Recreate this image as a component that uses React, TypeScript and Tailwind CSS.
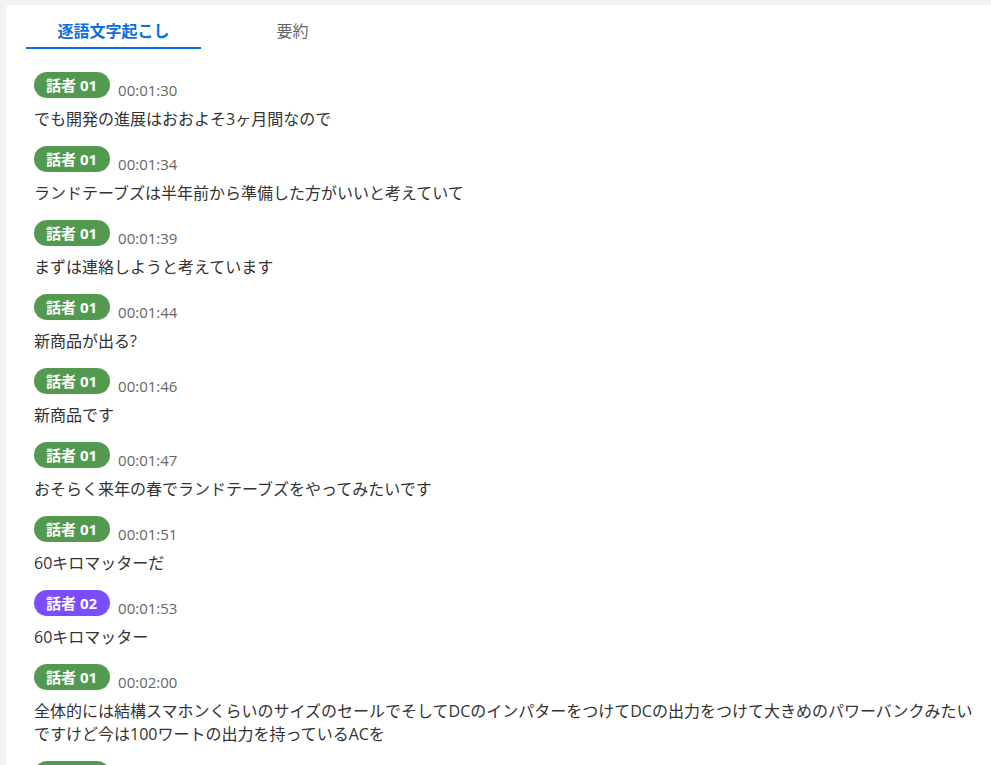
import React, { useState } from 'react';

type Entry = { speaker: '01' | '02'; time: string; text: string };

const entries: Entry[] = [
  { speaker: '01', time: '00:01:30', text: 'でも開発の進展はおおよそ3ヶ月間なので' },
  { speaker: '01', time: '00:01:34', text: 'ランドテーブズは半年前から準備した方がいいと考えていて' },
  { speaker: '01', time: '00:01:39', text: 'まずは連絡しようと考えています' },
  { speaker: '01', time: '00:01:44', text: '新商品が出る?' },
  { speaker: '01', time: '00:01:46', text: '新商品です' },
  { speaker: '01', time: '00:01:47', text: 'おそらく来年の春でランドテーブズをやってみたいです' },
  { speaker: '01', time: '00:01:51', text: '60キロマッターだ' },
  { speaker: '02', time: '00:01:53', text: '60キロマッター' },
  {
    speaker: '01',
    time: '00:02:00',
    text: '全体的には結構スマホンくらいのサイズのセールでそしてDCのインパターをつけてDCの出力をつけて大きめのパワーバンクみたいですけど今は100ワートの出力を持っているACを',
  },
  { speaker: '01', time: '00:02:05', text: 'そうですね' },
];

function SpeakerBadge({ speaker }: { speaker: '01' | '02' }) {
  const color = speaker === '01' ? 'bg-[#539a50]' : 'bg-[#7c4dff]';
  return (
    <span className={`inline-flex h-[26px] shrink-0 items-center rounded-full pl-3 pr-[13px] text-[15px] font-bold text-white ${color}`}>
      話者 {speaker}
    </span>
  );
}

export default function App() {
  const [tab, setTab] = useState<'verbatim' | 'summary'>('verbatim');

  return (
    <div
      className="h-[765px] overflow-hidden bg-[#f3f3f3] pl-[6px] pt-[5px]"
      style={{ fontFamily: '"Open Sans", "Noto Sans CJK JP", sans-serif' }}
    >
      <div className="h-full rounded-tl-[4px] bg-white pl-5">
        <div className="flex pt-[14px]">
          <button
            onClick={() => setTab('verbatim')}
            className={`w-[175px] border-b-2 pb-[4px] text-[16px] leading-[24px] ${
              tab === 'verbatim' ? 'border-[#0a6fe0] font-bold text-[#0a6fe0]' : 'border-transparent text-[#666]'
            }`}
          >
            逐語文字起こし
          </button>
          <button
            onClick={() => setTab('summary')}
            className={`w-[183px] border-b-2 pb-[4px] text-[16px] leading-[24px] ${
              tab === 'summary' ? 'border-[#0a6fe0] font-bold text-[#0a6fe0]' : 'border-transparent text-[#666]'
            }`}
          >
            要約
          </button>
        </div>

        <div className="flex flex-col gap-[15px] pl-2 pr-3 pt-[23px]">
          {entries.map((e, i) => (
            <div key={i}>
              <div className="flex items-end gap-2">
                <SpeakerBadge speaker={e.speaker} />
                <span className="text-[15px] leading-[16px] text-[#666]">{e.time}</span>
              </div>
              <p className="mt-[10px] text-[16px] leading-[23px] text-[#333]">{e.text}</p>
            </div>
          ))}
        </div>
      </div>
    </div>
  );
}
